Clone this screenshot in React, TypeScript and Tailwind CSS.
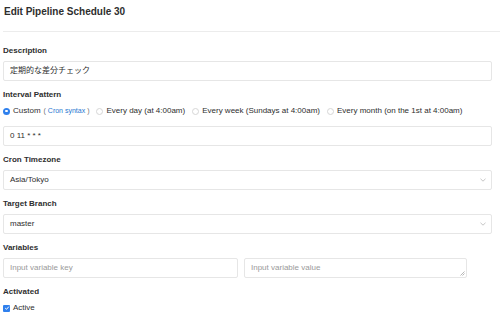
import React from 'react';

const font = { fontFamily: '"Liberation Sans", "Noto Sans CJK JP", sans-serif' };

const Label: React.FC<{ children: React.ReactNode }> = ({ children }) => (
  <div className="h-[12px] leading-[12px] text-[8px] font-bold text-[#2e2e2e] mb-[4px]">{children}</div>
);

const Box: React.FC<{ children?: React.ReactNode; className?: string }> = ({ children, className }) => (
  <div
    className={
      'h-[20px] border border-[#e6e6e6] rounded-[2px] bg-white flex items-center px-[6px] text-[8px] text-[#2e2e2e] ' +
      (className || '')
    }
  >
    {children}
  </div>
);

const Chevron = () => (
  <svg width="6" height="4" viewBox="0 0 6 4" className="ml-auto mr-[-1px]">
    <path d="M0.5 0.8 L3 3.2 L5.5 0.8" fill="none" stroke="#b5b5b5" strokeWidth="0.8" />
  </svg>
);

const Radio: React.FC<{ checked?: boolean; className?: string }> = ({ checked, className }) =>
  checked ? (
    <span className={'block w-[7px] h-[7px] rounded-full bg-[#2f80ed] flex items-center justify-center shrink-0 ' + (className || '')}>
      <span className="block w-[2.5px] h-[2.5px] rounded-full bg-white" />
    </span>
  ) : (
    <span className={'block w-[7px] h-[7px] rounded-full border border-[#d6d6d6] bg-white shrink-0 ' + (className || '')} />
  );

export default function App() {
  return (
    <div className="w-[500px] h-[316px] bg-white overflow-hidden" style={font}>
      <div className="pt-[5px] pl-[4px] h-[19px] leading-[14px] text-[10px] font-bold text-[#2e2e2e]">
        Edit Pipeline Schedule 30
      </div>
      <div className="ml-[3px] mt-[12px] border-t border-[#ececec]" />
      <div className="pl-[3px] pr-[8px] pt-[13px]">
        <Label>Description</Label>
        <Box>定期的な差分チェック</Box>
        <div className="h-[8px]" />

        <Label>Interval Pattern</Label>
        <div className="h-[12px] flex items-center text-[8px] text-[#2e2e2e] whitespace-nowrap">
          <Radio checked />
          <span className="ml-[3px]">Custom</span>
          <span className="ml-[3px] text-[7px] text-[#707070]">
            ( <span className="text-[#1f78d1]">Cron syntax</span> )
          </span>
          <Radio className="ml-[7px]" />
          <span className="ml-[3px]">Every day (at 4:00am)</span>
          <Radio className="ml-[7px]" />
          <span className="ml-[3px]">Every week (Sundays at 4:00am)</span>
          <Radio className="ml-[7px]" />
          <span className="ml-[3px]">Every month (on the 1st at 4:00am)</span>
        </div>
        <div className="h-[9px]" />
        <Box>0 11 * * *</Box>
        <div className="h-[8px]" />

        <Label>Cron Timezone</Label>
        <Box>
          Asia/Tokyo
          <Chevron />
        </Box>
        <div className="h-[8px]" />

        <Label>Target Branch</Label>
        <Box>
          master
          <Chevron />
        </Box>
        <div className="h-[8px]" />

        <Label>Variables</Label>
        <div className="flex gap-[6px] pr-[25px]">
          <Box className="w-[235px] text-[#9a9a9a]">Input variable key</Box>
          <Box className="flex-1 text-[#9a9a9a] relative">
            Input variable value
            <svg width="5" height="5" viewBox="0 0 5 5" className="absolute right-[1px] bottom-[1px]">
              <path d="M0.5 4.5 L4.5 0.5 M2.5 4.5 L4.5 2.5" stroke="#999" strokeWidth="0.7" />
            </svg>
          </Box>
        </div>
        <div className="h-[8px]" />

        <Label>Activated</Label>
        <div className="h-[12px] flex items-center text-[8px] text-[#2e2e2e]">
          <span className="block w-[7px] h-[7px] rounded-[1px] bg-[#2f80ed] flex items-center justify-center">
            <svg width="6" height="6" viewBox="0 0 6 6">
              <path d="M1.2 3.1 L2.5 4.3 L4.9 1.6" fill="none" stroke="white" strokeWidth="1" />
            </svg>
          </span>
          <span className="ml-[3px]">Active</span>
        </div>
      </div>
    </div>
  );
}
